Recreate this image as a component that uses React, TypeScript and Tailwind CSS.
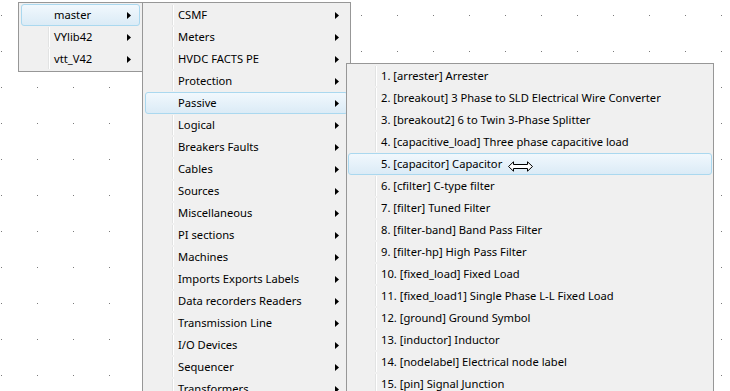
import React from "react";

const libraries = ["master", "VYlib42", "vtt_V42"];

const groups = [
  "CSMF",
  "Meters",
  "HVDC FACTS PE",
  "Protection",
  "Passive",
  "Logical",
  "Breakers Faults",
  "Cables",
  "Sources",
  "Miscellaneous",
  "PI sections",
  "Machines",
  "Imports Exports Labels",
  "Data recorders Readers",
  "Transmission Line",
  "I/O Devices",
  "Sequencer",
  "Transformers",
];

const components = [
  "1. [arrester] Arrester",
  "2. [breakout] 3 Phase to SLD Electrical Wire Converter",
  "3. [breakout2] 6 to Twin 3-Phase Splitter",
  "4. [capacitive_load] Three phase capacitive load",
  "5. [capacitor] Capacitor",
  "6. [cfilter] C-type filter",
  "7. [filter] Tuned Filter",
  "8. [filter-band] Band Pass Filter",
  "9. [filter-hp] High Pass Filter",
  "10. [fixed_load] Fixed Load",
  "11. [fixed_load1] Single Phase L-L Fixed Load",
  "12. [ground] Ground Symbol",
  "13. [inductor] Inductor",
  "14. [nodelabel] Electrical node label",
  "15. [pin] Signal Junction",
  "16. [resistor] Resistor",
];

// small black submenu triangle
function SubArrow() {
  return (
    <svg width="4" height="7" viewBox="0 0 4 7" className="shrink-0">
      <path d="M0 0 L4 3.5 L0 7 Z" fill="#000" />
    </svg>
  );
}

// horizontal resize cursor (white arrow with black outline)
function ResizeCursor() {
  return (
    <svg width="25" height="11" viewBox="0 0 25 11">
      <path
        d="M0.5 5.5 L5.5 0.8 L5.5 3.5 L19.5 3.5 L19.5 0.8 L24.5 5.5 L19.5 10.2 L19.5 7.5 L5.5 7.5 L5.5 10.2 Z"
        fill="#fff"
        stroke="#000"
        strokeWidth="1"
      />
    </svg>
  );
}

interface ItemProps {
  label: string;
  active?: boolean;
  submenu?: boolean;
  children?: React.ReactNode;
}

function MenuItem({ label, active = false, submenu = false, children }: ItemProps) {
  return (
    <div
      className={`flex h-[22px] items-center rounded-[3px] border ${
        active
          ? "border-[#aad8ef] bg-gradient-to-b from-[#f1f8fd] to-[#dbebf6]"
          : "border-transparent"
      }`}
    >
      <div
        className={`h-full w-[27px] shrink-0 ${
          active ? "" : "border-r border-r-[#e2e3e3] shadow-[1px_0_0_#ffffff]"
        }`}
      />
      <span className="ml-[5px] flex flex-1 items-center whitespace-nowrap text-[11.2px] leading-none text-[#000]">
        {label}
        {children}
      </span>
      {submenu && (
        <span className="mr-[8px] flex items-center">
          <SubArrow />
        </span>
      )}
    </div>
  );
}

export default function App() {
  return (
    <div
      className="relative h-[391px] w-[730px] overflow-hidden bg-white bg-[radial-gradient(circle_at_0.5px_0.5px,#7a7a7a_0.7px,transparent_0.8px)] bg-[length:36px_36px] bg-[position:1px_15px]"
      style={{ fontFamily: '"Noto Sans", "Open Sans", sans-serif' }}
    >
      {/* library menu */}
      <div className="absolute left-[18px] top-[2px] w-[125px] border border-[#979797] bg-[#f0f0f0] px-[2px] py-[1px]">
        {libraries.map((l, i) => (
          <MenuItem key={l} label={l} active={i === 0} submenu />
        ))}
      </div>

      {/* group menu */}
      <div className="absolute left-[142px] top-[2px] w-[209px] border border-[#979797] bg-[#f0f0f0] px-[2px] py-[1px]">
        {groups.map((g) => (
          <MenuItem key={g} label={g} active={g === "Passive"} submenu />
        ))}
      </div>

      {/* component menu */}
      <div className="absolute left-[346px] top-[63px] w-[368px] border border-[#979797] bg-[#f0f0f0] px-[1px] py-[1px]">
        {components.map((c, i) => (
          <MenuItem key={c} label={c} active={i === 4}>
            {i === 4 && (
              <span className="ml-[6px] mt-[5px]">
                <ResizeCursor />
              </span>
            )}
          </MenuItem>
        ))}
      </div>
    </div>
  );
}
